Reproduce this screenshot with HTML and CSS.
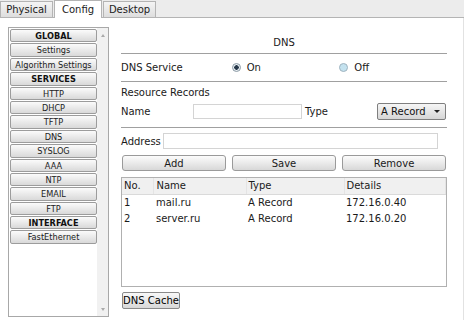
FILE: index.html
```html
<!DOCTYPE html>
<html lang="en">
<head>
    <meta charset="UTF-8">
    <title>Server - Config - DNS</title>
    <link rel="stylesheet" href="styles.css">
</head>
<body>
    <nav class="tabs">
        <span class="tab">Physical</span>
        <span class="tab active">Config</span>
        <span class="tab">Desktop</span>
    </nav>

    <div class="frame">
        <div class="side">
            <div class="side-list">
                <div class="side-item head">GLOBAL</div>
                <div class="side-item">Settings</div>
                <div class="side-item">Algorithm Settings</div>
                <div class="side-item head">SERVICES</div>
                <div class="side-item">HTTP</div>
                <div class="side-item">DHCP</div>
                <div class="side-item">TFTP</div>
                <div class="side-item">DNS</div>
                <div class="side-item">SYSLOG</div>
                <div class="side-item">AAA</div>
                <div class="side-item">NTP</div>
                <div class="side-item">EMAIL</div>
                <div class="side-item">FTP</div>
                <div class="side-item head">INTERFACE</div>
                <div class="side-item">FastEthernet</div>
            </div>
            <div class="side-scroll">
                <span class="arrow up"></span>
                <span class="arrow down"></span>
            </div>
        </div>

        <div class="panel">
            <div class="panel-title">DNS</div>

            <div class="row service">
                <span class="lbl-service">DNS Service</span>
                <label class="radio-group on-group"><span class="radio checked"></span>On</label>
                <label class="radio-group"><span class="radio"></span>Off</label>
            </div>

            <div class="records">
                <div class="records-title">Resource Records</div>
                <div class="row name-row">
                    <span class="lbl-name">Name</span>
                    <input type="text" class="field name-field">
                    <span class="lbl-type">Type</span>
                    <div class="select">A Record<span class="caret"></span></div>
                </div>
            </div>

            <div class="row address-row">
                <span class="lbl-address">Address</span>
                <input type="text" class="field address-field">
            </div>

            <div class="buttons">
                <button class="btn">Add</button>
                <button class="btn">Save</button>
                <button class="btn">Remove</button>
            </div>

            <div class="table-box">
                <table class="records-table">
                    <thead>
                        <tr>
                            <th class="c-no">No.</th>
                            <th class="c-name">Name</th>
                            <th class="c-type">Type</th>
                            <th class="c-details">Details</th>
                        </tr>
                    </thead>
                    <tbody>
                        <tr>
                            <td>1</td>
                            <td>mail.ru</td>
                            <td>A Record</td>
                            <td>172.16.0.40</td>
                        </tr>
                        <tr>
                            <td>2</td>
                            <td>server.ru</td>
                            <td>A Record</td>
                            <td>172.16.0.20</td>
                        </tr>
                    </tbody>
                </table>
            </div>

            <button class="btn-cache">DNS Cache</button>
        </div>
    </div>
</body>
</html>
```

FILE: styles.css
```css
* {
    margin: 0;
    padding: 0;
    box-sizing: border-box;
    font-family: 'DejaVu Sans', Verdana, sans-serif;
}

body {
    width: 464px;
    height: 320px;
    background-color: #ffffff;
    color: #1a1a1a;
    font-size: 10px;
    overflow: hidden;
}

/* tabs */
.tabs {
    display: flex;
    align-items: flex-end;
    height: 18px;
    background-color: #ececec;
    border-bottom: 1px solid #b4b4b4;
}

.tab {
    height: 16px;
    width: 53px;
    line-height: 15px;
    text-align: center;
    font-size: 10px;
    color: #222;
    background: linear-gradient(#f4f4f4, #dedede);
    border: 1px solid #b4b4b4;
    border-bottom: none;
    margin-right: 1px;
}

.tab:nth-child(2) {
    width: 48px;
}

.tab.active {
    height: 18px;
    line-height: 17px;
    background: #ffffff;
    margin-bottom: -1px;
}

.frame {
    display: flex;
    height: 302px;
    padding: 9px 0 0 8px;
    border-right: 1px solid #e2e2e2;
}

/* left menu */
.side {
    display: flex;
    width: 101px;
    height: 290px;
    border: 1px solid #a8a8a8;
}

.side-list {
    width: 88px;
    padding: 1px 0 0 1px;
}

.side-item {
    height: 13.4px;
    margin-bottom: 1px;
    line-height: 12px;
    text-align: center;
    font-size: 8.2px;
    color: #222;
    background: linear-gradient(#fbfbfb, #d9d9d9);
    border: 1px solid #9c9c9c;
    border-radius: 2px;
}

.side-item.head {
    font-weight: bold;
    color: #111;
}

.side-scroll {
    position: relative;
    flex: 1;
    background-color: #f1f1f1;
}

.arrow {
    position: absolute;
    left: 4px;
    width: 0;
    height: 0;
    border-left: 2px solid transparent;
    border-right: 2px solid transparent;
}

.arrow.up {
    top: 6px;
    border-bottom: 3px solid #aaa;
}

.arrow.down {
    bottom: 5px;
    border-top: 3px solid #aaa;
}

/* right panel */
.panel {
    width: 326px;
    margin-left: 12px;
    display: flex;
    flex-direction: column;
}

.panel-title {
    height: 27px;
    padding-top: 10px;
    line-height: 12px;
    text-align: center;
    border-bottom: 1px solid #a0a0a0;
}

.row {
    display: flex;
    align-items: center;
}

.service {
    height: 28px;
    border-bottom: 1px solid #a0a0a0;
}

.lbl-service {
    width: 111px;
}

.radio-group {
    display: flex;
    align-items: center;
    width: 108px;
}

.radio {
    width: 9px;
    height: 9px;
    margin-right: 6px;
    border-radius: 50%;
    border: 1px solid #9fb3bf;
    background-color: #c4e2ef;
}

.radio.checked {
    background: radial-gradient(circle, #27394a 0, #27394a 2px, #e8eef2 2.5px);
    border-color: #8b9aa5;
}

.records {
    height: 46px;
    border-bottom: 1px solid #a0a0a0;
}

.records-title {
    height: 20px;
    line-height: 21px;
}

.name-row {
    height: 18px;
}

.lbl-name {
    width: 72px;
}

.field {
    height: 15px;
    border: 1px solid #d4d4d4;
    background: #fff;
}

.name-field {
    width: 109px;
}

.lbl-type {
    width: 75px;
    padding-left: 3px;
}

.select {
    position: relative;
    width: 69px;
    height: 17px;
    line-height: 15px;
    padding-left: 3px;
    color: #111;
    background: linear-gradient(#f6f6f6, #d6d6d6);
    border: 1px solid #7f7f7f;
    border-radius: 2px;
}

.caret {
    position: absolute;
    right: 5px;
    top: 6px;
    border-left: 3px solid transparent;
    border-right: 3px solid transparent;
    border-top: 3px solid #222;
}

.address-row {
    margin-top: 5px;
    height: 16px;
}

.lbl-address {
    width: 42px;
}

.address-field {
    width: 275px;
    height: 16px;
}

.buttons {
    display: flex;
    gap: 6px;
    margin-top: 6px;
    padding-left: 1px;
}

.btn {
    width: 104px;
    height: 16px;
    font-size: 10px;
    color: #1a1a1a;
    background: linear-gradient(#fcfcfc, #d8d8d8);
    border: 1px solid #9a9a9a;
    border-radius: 3px;
}

.table-box {
    width: 326px;
    height: 110px;
    margin-top: 6px;
    border: 1px solid #b0b0b0;
}

.records-table {
    width: 100%;
    border-collapse: collapse;
    table-layout: fixed;
}

.records-table th {
    height: 16px;
    font-weight: normal;
    text-align: left;
    padding-left: 2px;
    background-color: #f0f0f0;
    border-bottom: 1px solid #dadada;
    border-right: 1px solid #e4e4e4;
}

.records-table td {
    height: 16px;
    padding-left: 2px;
}

.c-no { width: 31px; }
.c-name { width: 93px; }
.c-type { width: 98px; }

.records-table td:nth-child(2),
.records-table th.c-name {
    padding-left: 3px;
}

.btn-cache {
    width: 58px;
    height: 17px;
    margin-top: 5px;
    margin-left: 1px;
    font-size: 10px;
    color: #000;
    background: linear-gradient(#f8f8f8, #d8d8d8);
    border: 1px solid #8a8a8a;
    border-radius: 2px;
}
```
